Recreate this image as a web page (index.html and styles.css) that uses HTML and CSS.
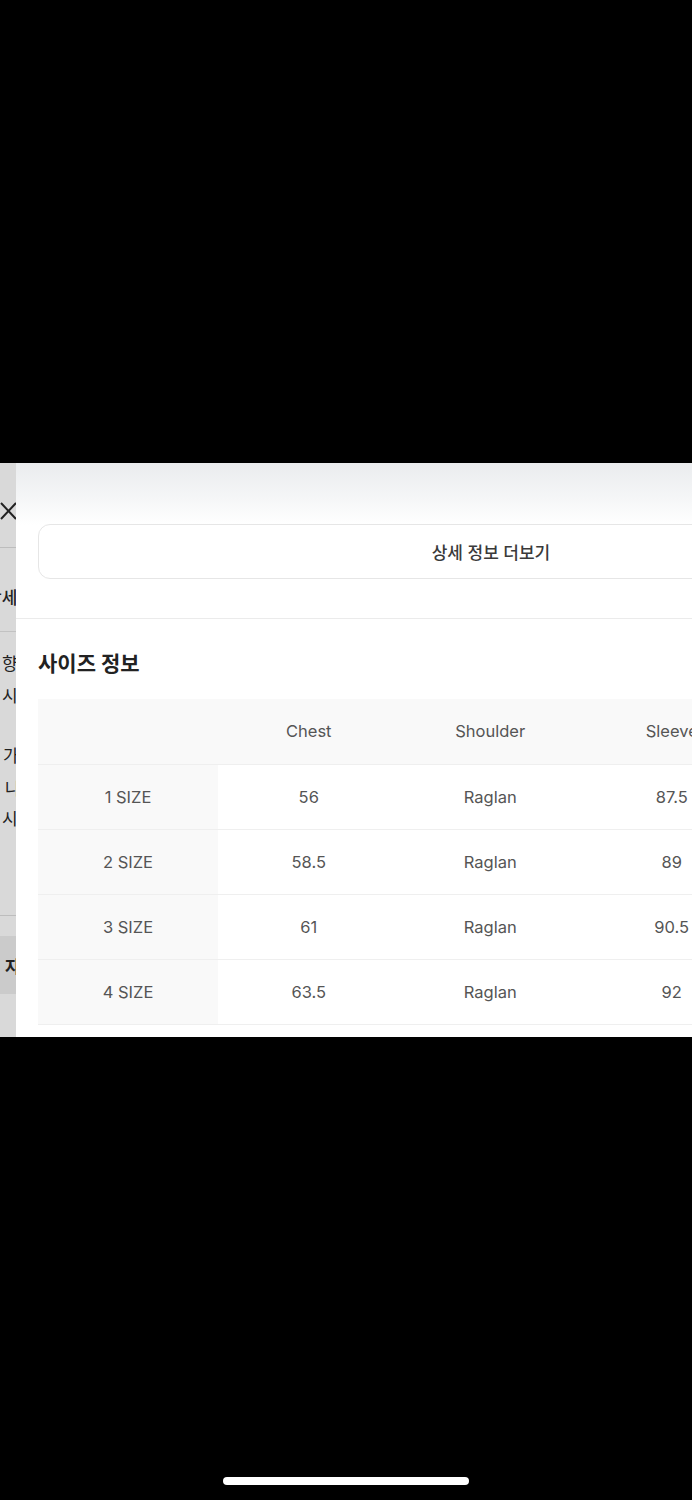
FILE: index.html
```html
<!DOCTYPE html>
<html lang="ko">
<head>
<meta charset="utf-8">
<title>사이즈 정보</title>
<link rel="stylesheet" href="styles.css">
</head>
<body>
<div class="top-black"></div>
<div class="stage">
  <div class="behind">
    <div class="b-top">
      <svg class="b-close" width="18" height="18" viewBox="0 0 18 18"><path d="M1 1 L16 17 M16 1 L1 17" stroke="#222" stroke-width="2" fill="none"/></svg>
    </div>
    <div class="b-row"><span class="b-title">상세</span></div>
    <div class="b-text">
      <div class="b-line l1">향균</div>
      <div class="b-line l2">시</div>
      <div class="b-line l3">가</div>
      <div class="b-line l4">나</div>
      <div class="b-line l5">시</div>
    </div>
    <div class="b-block"><span class="b-bold">자세</span></div>
  </div>
  <div class="sheet">
    <div class="sheet-top">
      <button class="more-btn">상세 정보 더보기</button>
    </div>
    <div class="divider"></div>
    <section class="size-section">
      <h2 class="size-title">사이즈 정보</h2>
      <table class="size-table">
        <colgroup>
          <col class="c-first"><col><col><col><col>
        </colgroup>
        <thead>
          <tr><th></th><th>Chest</th><th>Shoulder</th><th>Sleeve</th><th>Length</th></tr>
        </thead>
        <tbody>
          <tr><th>1 SIZE</th><td>56</td><td>Raglan</td><td>87.5</td><td>70</td></tr>
          <tr><th>2 SIZE</th><td>58.5</td><td>Raglan</td><td>89</td><td>72</td></tr>
          <tr><th>3 SIZE</th><td>61</td><td>Raglan</td><td>90.5</td><td>74</td></tr>
          <tr><th>4 SIZE</th><td>63.5</td><td>Raglan</td><td>92</td><td>76</td></tr>
        </tbody>
      </table>
    </section>
  </div>
</div>
<div class="bottom-black">
  <div class="home-indicator"></div>
</div>
</body>
</html>
```

FILE: styles.css
```css
html, body {
  margin: 0;
  padding: 0;
  background: #000;
  width: 692px;
  overflow-x: hidden;
}
body {
  font-family: "Inter", "Noto Sans CJK KR", sans-serif;
}
.top-black {
  height: 463px;
}
.stage {
  position: relative;
  height: 574px;
  overflow: hidden;
  background: #d9d9d9;
}
.behind {
  display: flex;
  flex-direction: column;
  height: 100%;
  background: #d9d9d9;
  color: #222;
  font-size: 17px;
}
.b-top {
  height: 85px;
  border-bottom: 1px solid #bdbdbd;
  display: flex;
  align-items: center;
  padding-top: 11px;
  box-sizing: border-box;
}
.b-close {
  display: block;
}
.b-row {
  height: 84px;
  border-bottom: 1px solid #c2c2c2;
  display: flex;
  align-items: center;
  padding-top: 14px;
  box-sizing: border-box;
}
.b-title {
  margin-left: -14px;
  font-weight: 500;
  white-space: nowrap;
}
.b-text {
  height: 284px;
  border-bottom: 1px solid #bdbdbd;
  box-sizing: border-box;
  padding-top: 20px;
  line-height: 24px;
}
.b-line {
  margin-left: 2px;
  white-space: nowrap;
  height: 24px;
}
.l1 { margin-bottom: 8px; }
.l2 { margin-bottom: 36px; }
.l3 { margin-bottom: 9px; margin-left: 3px; }
.l4 { margin-bottom: 6px; margin-left: 5px; }
.l5 { margin-left: 2px; }
.b-block {
  margin-top: 20px;
  height: 58px;
  background: #cbcbcb;
  display: flex;
  align-items: center;
}
.b-bold {
  margin-left: 5px;
  font-weight: 700;
  white-space: nowrap;
}
.sheet {
  position: absolute;
  top: 0;
  left: 16px;
  bottom: 0;
  width: 950px;
  background: linear-gradient(to bottom, #eaecee 0px, #f5f6f7 35px, #ffffff 62px);
  display: flex;
  flex-direction: column;
}
.sheet-top {
  padding: 61px 22px 39px;
}
.more-btn {
  display: block;
  width: 100%;
  height: 55px;
  border: 1px solid #e6e6e6;
  border-radius: 12px;
  background: #fff;
  font-family: "Inter", "Noto Sans CJK KR", sans-serif;
  font-size: 17px;
  font-weight: 500;
  color: #3a3a3a;
  padding: 0;
}
.divider {
  height: 1px;
  background: #ebebeb;
}
.size-section {
  padding: 0 22px;
  background: #fff;
  flex: 1;
}
.size-title {
  margin: 31px 0 21px;
  font-size: 21px;
  line-height: 28px;
  font-weight: 700;
  color: #222;
}
.size-table {
  width: 906px;
  border-collapse: collapse;
  table-layout: fixed;
  font-size: 16.5px;
  color: #555;
}
.c-first {
  width: 180px;
}
.size-table th,
.size-table td {
  height: 65px;
  padding: 0;
  text-align: center;
  font-weight: 400;
  border-bottom: 1px solid #efefef;
  box-sizing: border-box;
}
.size-table thead th {
  background: #f9f9f9;
  color: #555;
}
.size-table tbody th {
  background: #f9f9f9;
}
.bottom-black {
  height: 463px;
  display: flex;
  justify-content: center;
}
.home-indicator {
  margin-top: 440px;
  width: 246px;
  height: 8px;
  border-radius: 4px;
  background: #fff;
  margin-left: -1px;
}
```
